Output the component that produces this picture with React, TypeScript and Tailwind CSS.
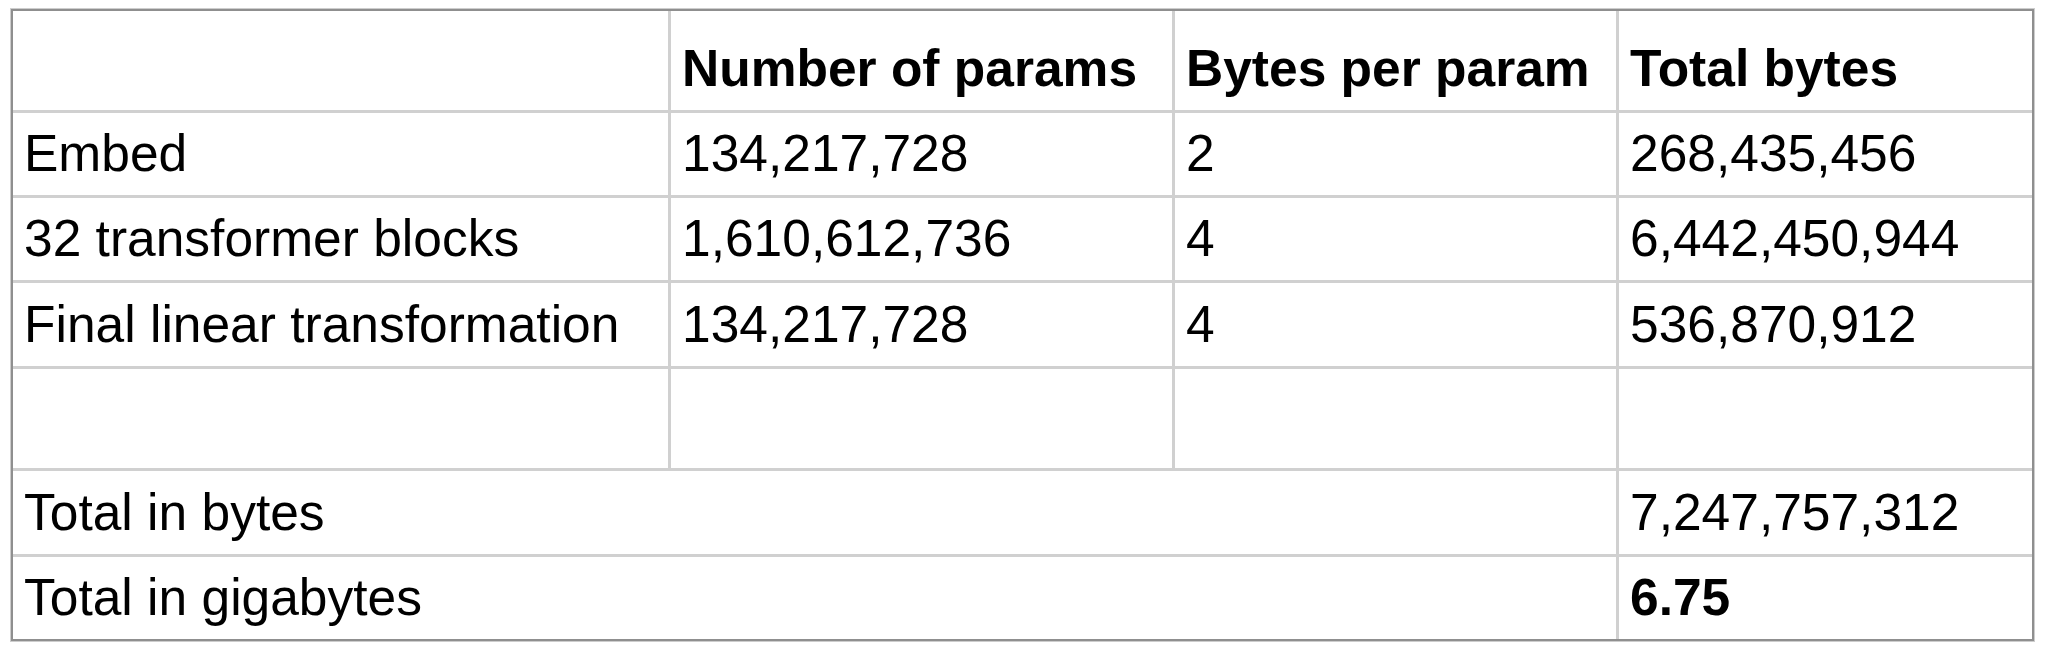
const font = { fontFamily: '"Liberation Sans", Arial, sans-serif' };

type Cell = { text: string; bold?: boolean; span?: boolean };

const rows: Cell[][] = [
  [{ text: "" }, { text: "Number of params", bold: true }, { text: "Bytes per param", bold: true }, { text: "Total bytes", bold: true }],
  [{ text: "Embed" }, { text: "134,217,728" }, { text: "2" }, { text: "268,435,456" }],
  [{ text: "32 transformer blocks" }, { text: "1,610,612,736" }, { text: "4" }, { text: "6,442,450,944" }],
  [{ text: "Final linear transformation" }, { text: "134,217,728" }, { text: "4" }, { text: "536,870,912" }],
  [{ text: "" }, { text: "" }, { text: "" }, { text: "" }],
  [{ text: "Total in bytes", span: true }, { text: "7,247,757,312" }],
  [{ text: "Total in gigabytes", span: true }, { text: "6.75", bold: true }],
];

export default function App() {
  return (
    <div className="w-[2048px] h-[653px] bg-white pt-[9px] pl-[11px]" style={font}>
      <div className="w-[2023px] border-2 border-[#8f8f8f] shadow-[0_0_0_1px_#cdcdcd]">
        <div className="grid grid-cols-[658px_504px_444px_413px] grid-rows-[102px_85px_85px_86px_102px_86px_82px] text-[51.5px] leading-[1.15] text-black">
          {rows.map((row, r) =>
            row.map((cell, c) => {
              const lastCol = c === row.length - 1;
              const lastRow = r === rows.length - 1;
              return (
                <div
                  key={`${r}-${c}`}
                  className={[
                    "flex items-end pl-[11px] pb-[12px] whitespace-nowrap border-[#d0d0d0]",
                    cell.span ? "col-span-3" : "",
                    lastCol ? "" : "border-r-[3px]",
                    lastRow ? "" : "border-b-[3px]",
                    cell.bold ? "font-bold" : "",
                  ].join(" ")}
                >
                  {cell.text}
                </div>
              );
            })
          )}
        </div>
      </div>
    </div>
  );
}
